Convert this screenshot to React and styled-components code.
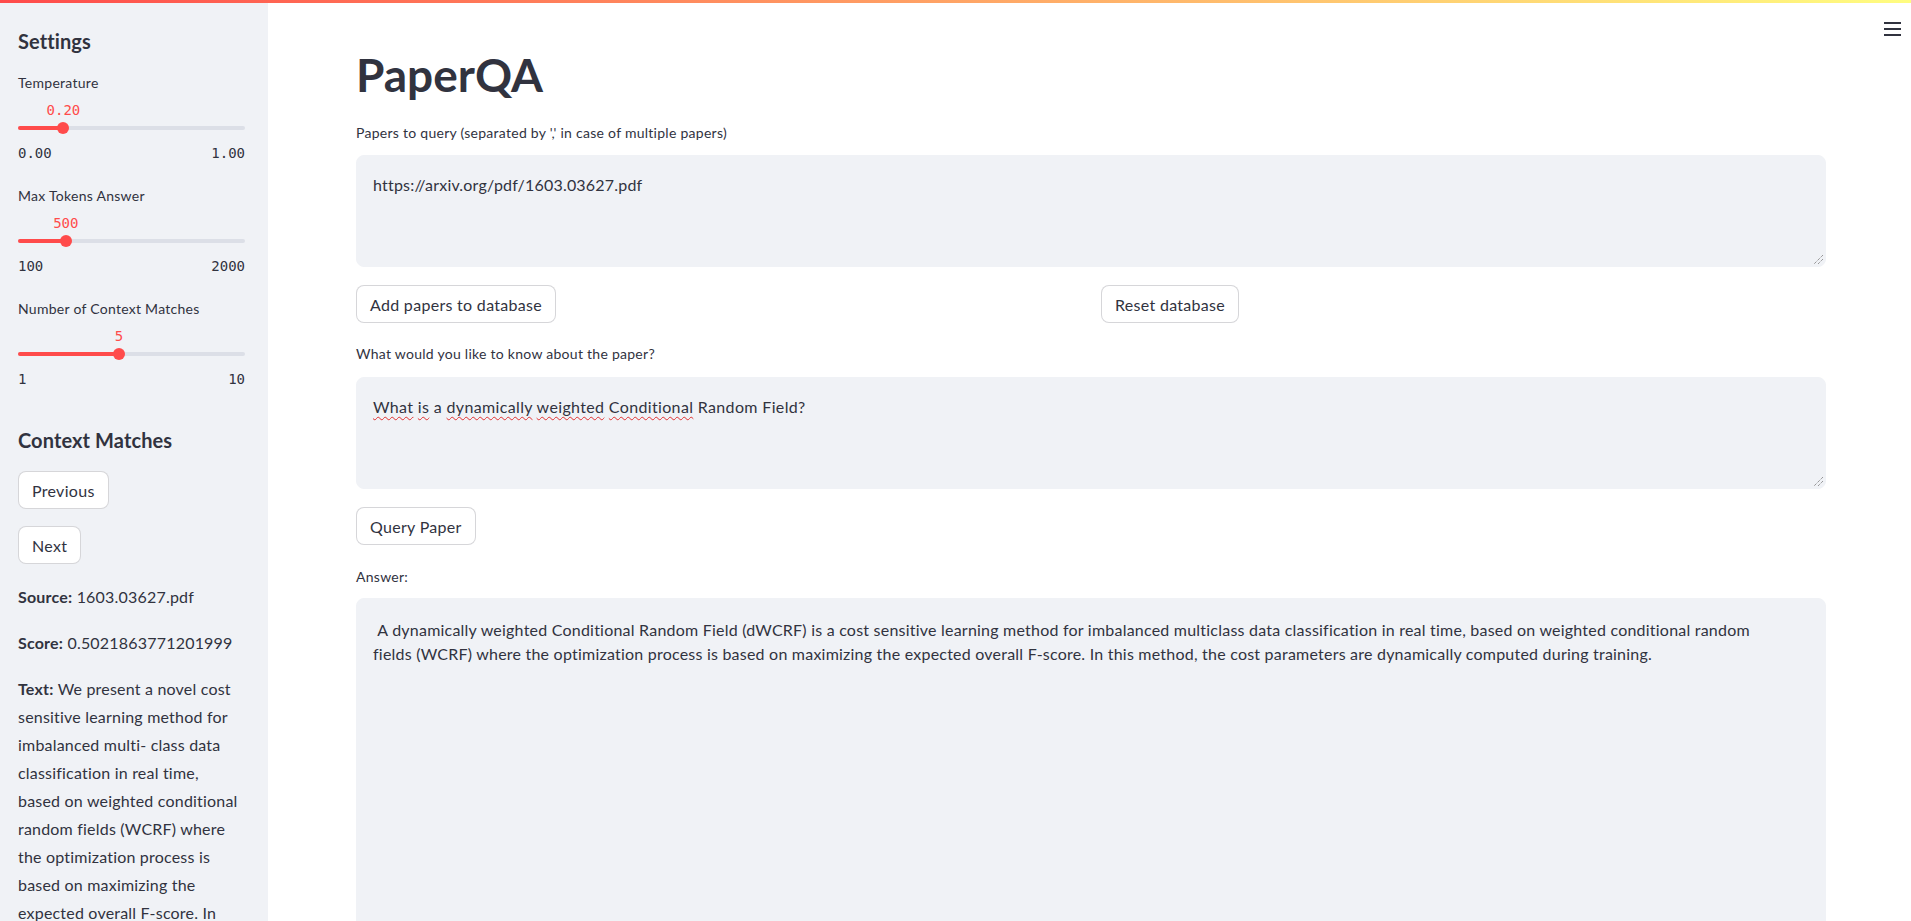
import React from "react"
import styled, { createGlobalStyle } from "styled-components"

const GlobalStyle = createGlobalStyle`
	html, body {
		margin: 0;
		padding: 0;
		height: 100%;
		overflow: hidden;
		background: #ffffff;
	}
	body {
		font-family: Lato, "Noto Sans", sans-serif;
		color: #31333f;
		letter-spacing: 0.2px;
	}
	#root {
		height: 100%;
	}
`

const Page = styled.div`
	display: flex;
	flex-direction: column;
	height: 100%;
`

const Decoration = styled.div`
	flex: none;
	height: 3px;
	background: linear-gradient(90deg, #ff4b4b, #fffd80);
`

const Body = styled.div`
	position: relative;
	flex: 1;
	display: flex;
	min-height: 0;
`

const Sidebar = styled.aside`
	flex: none;
	width: 268px;
	box-sizing: border-box;
	padding: 24px 23px 0 18px;
	background: #f0f2f6;
	overflow: hidden;
`

const Main = styled.main`
	flex: 1;
	min-width: 0;
	padding: 44px 85px 0 88px;
	overflow: hidden;
`

const MenuButton = styled.div`
	position: absolute;
	top: 17px;
	right: 9px;
	width: 18px;
	height: 18px;
	color: #31333f;
`

const SectionTitle = styled.h3`
	margin: ${p => p.$top || 0}px 0 ${p => p.$bottom || 0}px;
	font-size: 20px;
	font-weight: 700;
	line-height: 28px;
	letter-spacing: 0.1px;
`

const FieldLabel = styled.div`
	margin: ${p => p.$top || 0}px 0 ${p => p.$bottom || 0}px;
	font-size: 14px;
	line-height: 20px;
	letter-spacing: 0.27px;
`

/* slider */

const SliderBlock = styled.div`
	margin-bottom: 23px;
`

const ValueRow = styled.div`
	position: relative;
	height: 20px;
	margin-top: 7px;
`

const ThumbValue = styled.span`
	position: absolute;
	top: 0;
	transform: translateX(-50%);
	font-family: "DejaVu Sans Mono", "Liberation Mono", monospace;
	font-size: 14px;
	line-height: 20px;
	letter-spacing: 0;
	color: #ff4b4b;
`

const TrackArea = styled.div`
	display: flex;
	align-items: center;
	height: 16px;
`

const Track = styled.div`
	position: relative;
	width: 100%;
	height: 4px;
	border-radius: 2px;
	background: #dcdfe7;
`

const TrackFill = styled.div`
	position: absolute;
	left: 0;
	top: 0;
	bottom: 0;
	border-radius: 2px;
	background: #ff4b4b;
`

const Thumb = styled.div`
	position: absolute;
	top: 50%;
	width: 12px;
	height: 12px;
	border-radius: 50%;
	background: #ff4b4b;
	transform: translate(-50%, -50%);
`

const Ticks = styled.div`
	display: flex;
	justify-content: space-between;
	margin-top: 7px;
	font-family: "DejaVu Sans Mono", "Liberation Mono", monospace;
	font-size: 14px;
	line-height: 20px;
	letter-spacing: 0;
`

const Slider = ({ label, value, display, min, max, minText, maxText }) => {
	const pct = ((value - min) / (max - min)) * 100
	return (
		<SliderBlock>
			<FieldLabel>{label}</FieldLabel>
			<ValueRow>
				<ThumbValue style={{ left: pct + "%" }}>{display}</ThumbValue>
			</ValueRow>
			<TrackArea>
				<Track>
					<TrackFill style={{ width: pct + "%" }} />
					<Thumb style={{ left: pct + "%" }} />
				</Track>
			</TrackArea>
			<Ticks>
				<span>{minText}</span>
				<span>{maxText}</span>
			</Ticks>
		</SliderBlock>
	)
}

/* buttons and text */

const Button = styled.button`
	display: block;
	justify-self: start;
	height: 38px;
	margin: ${p => p.$top || 0}px 0 ${p => p.$bottom || 0}px;
	padding: 0 13px;
	border: 1px solid rgba(49, 51, 63, 0.2);
	border-radius: 8px;
	background: #ffffff;
	font-family: inherit;
	font-size: 16px;
	letter-spacing: 0.3px;
	color: #31333f;
	cursor: pointer;
`

const Info = styled.p`
	margin: 0 0 18px;
	font-size: 16px;
	line-height: 28px;
`

const Title = styled.h1`
	margin: 0;
	font-size: 46px;
	font-weight: 700;
	line-height: 56px;
	letter-spacing: 0;
	color: #31333f;
`

const TextBox = styled.div`
	position: relative;
	box-sizing: border-box;
	height: ${p => p.$height}px;
	padding: ${p => p.$padTop}px 16px 0;
	border: 1px solid #f0f2f6;
	border-radius: 8px;
	background: #f0f2f6;
	font-size: 16px;
	line-height: 24px;
	letter-spacing: ${p => p.$spacing || 0.2}px;
	white-space: pre-wrap;
`

const Grip = styled.svg`
	position: absolute;
	right: 2px;
	bottom: 2px;
	width: 9px;
	height: 9px;
`

const Typo = styled.span`
	text-decoration: underline wavy #e03030;
	text-decoration-thickness: 1px;
	text-underline-offset: 3px;
	text-decoration-skip-ink: none;
`

const ButtonRow = styled.div`
	display: grid;
	grid-template-columns: 1fr 1fr;
	gap: 20px;
	margin-top: 18px;
`

const ResizeGrip = () => (
	<Grip viewBox="0 0 9 9">
		<path d="M9 0 L0 9 M9 4 L4 9" stroke="#707070" strokeWidth="1" strokeDasharray="1 1" />
	</Grip>
)

const sideText =
	"We present a novel cost sensitive learning method for imbalanced multi- class data classification in real time, based on weighted conditional random fields (WCRF) where the optimization process is based on maximizing the expected overall F-score. In this method, the cost parameters are dynamically computed during training."

const answer =
	" A dynamically weighted Conditional Random Field (dWCRF) is a cost sensitive learning method for imbalanced multiclass data classification in real time, based on weighted conditional random\nfields (WCRF) where the optimization process is based on maximizing the expected overall F-score. In this method, the cost parameters are dynamically computed during training."

const App = () => {
	return (
		<Page>
			<GlobalStyle />
			<Decoration />
			<Body>
				<Sidebar>
					<SectionTitle $bottom={18}>Settings</SectionTitle>
					<Slider label="Temperature" value={0.2} display="0.20" min={0} max={1} minText="0.00" maxText="1.00" />
					<Slider label="Max Tokens Answer" value={500} display="500" min={100} max={2000} minText="100" maxText="2000" />
					<Slider label="Number of Context Matches" value={5} display="5" min={1} max={10} minText="1" maxText="10" />

					<SectionTitle $top={37} $bottom={17}>Context Matches</SectionTitle>
					<Button $bottom={17}>Previous</Button>
					<Button $bottom={19}>Next</Button>
					<Info>
						<b>Source:</b> 1603.03627.pdf
					</Info>
					<Info>
						<b>Score:</b> 0.5021863771201999
					</Info>
					<Info>
						<b>Text:</b> {sideText}
					</Info>
				</Sidebar>

				<Main>
					<Title>PaperQA</Title>

					<FieldLabel $top={20} $bottom={12}>
						Papers to query (separated by ',' in case of multiple papers)
					</FieldLabel>
					<TextBox $height={112} $padTop={17}>
						https://arxiv.org/pdf/1603.03627.pdf
						<ResizeGrip />
					</TextBox>

					<ButtonRow>
						<Button>Add papers to database</Button>
						<Button>Reset database</Button>
					</ButtonRow>

					<FieldLabel $top={21} $bottom={13}>
						What would you like to know about the paper?
					</FieldLabel>
					<TextBox $height={112} $padTop={17} $spacing={0.35}>
						<Typo>What</Typo> <Typo>is</Typo> a <Typo>dynamically</Typo> <Typo>weighted</Typo>{" "}
						<Typo>Conditional</Typo> Random Field?
						<ResizeGrip />
					</TextBox>

					<Button $top={18}>Query Paper</Button>

					<FieldLabel $top={22} $bottom={11}>
						Answer:
					</FieldLabel>
					<TextBox $height={340} $padTop={19} $spacing={0.22}>
						{answer}
						<ResizeGrip />
					</TextBox>
				</Main>

				<MenuButton>
					<svg width="18" height="18" viewBox="0 0 18 18">
						<rect x="0" y="2" width="17" height="2" fill="currentColor" />
						<rect x="0" y="8" width="17" height="2" fill="currentColor" />
						<rect x="0" y="14" width="17" height="2" fill="currentColor" />
					</svg>
				</MenuButton>
			</Body>
		</Page>
	)
}

export default App
